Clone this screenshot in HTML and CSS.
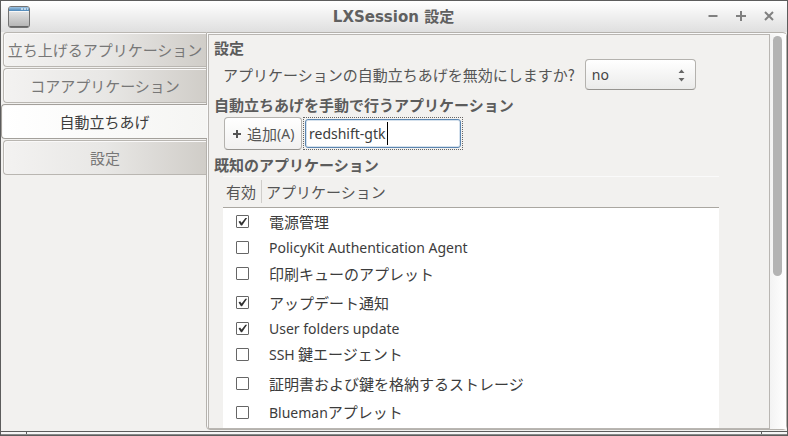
FILE: index.html
```html
<!DOCTYPE html>
<html lang="ja">
<head>
<meta charset="utf-8">
<title>LXSession 設定</title>
<link rel="stylesheet" href="styles.css">
</head>
<body>
<div class="window">
  <header class="titlebar">
    <svg class="app-icon" width="22" height="22" viewBox="0 0 22 22" aria-hidden="true">
      <defs>
        <linearGradient id="face" x1="0" y1="0" x2="0" y2="1"><stop offset="0" stop-color="#f2f2f2"/><stop offset="1" stop-color="#b2b2b2"/></linearGradient>
        <linearGradient id="bar" x1="0" y1="0" x2="0" y2="1"><stop offset="0" stop-color="#9dc3e2"/><stop offset="1" stop-color="#4d87b8"/></linearGradient>
      </defs>
      <rect x=".5" y=".5" width="21" height="21" rx="2.5" fill="url(#face)" stroke="#737373"/>
      <path d="M1 5V2.500Q1 1 2.500 1h17Q21 1 21 2.500V5z" fill="url(#bar)"/>
      <path d="M1.500 5.500h19" stroke="#f8f8f8"/>
      <path d="M13 3h2M16 3h2M19 3h1" stroke="#d9e8f4" stroke-width="1.500"/>
      <path d="M2 20.500h18" stroke="#666"/>
    </svg>
    <h1 class="title">LXSession <span class="cjk">設定</span></h1>
    <div class="controls">
      <button type="button" aria-label="最小化"><svg width="10" height="10" viewBox="0 0 10 10"><path d="M0.500 4h9" /></svg></button>
      <button type="button" aria-label="最大化"><svg width="10" height="10" viewBox="0 0 10 10"><path d="M0 4h10M5 -1v10" /></svg></button>
      <button type="button" aria-label="閉じる"><svg width="10" height="10" viewBox="0 0 10 10"><path d="M1 0l8 8M9 0l-8 8" /></svg></button>
    </div>
  </header>

  <div class="notebook">
    <nav class="tabs" role="tablist">
      <button type="button" class="tab" role="tab">立ち上げるアプリケーション</button>
      <button type="button" class="tab" role="tab">コアアプリケーション</button>
      <button type="button" class="tab active" role="tab" aria-selected="true">自動立ちあげ</button>
      <button type="button" class="tab" role="tab">設定</button>
    </nav>

    <main class="page">
      <div class="view">
        <h2>設定</h2>
        <div class="row">
          <label for="disable">アプリケーションの自動立ちあげを無効にしますか?</label>
          <span class="combo">
            <select id="disable"><option>no</option><option>yes</option></select>
            <svg class="arrows" width="7" height="13" viewBox="0 0 7 13" aria-hidden="true"><path d="M.5 4L3.500 0.500L6.500 4zM.5 9L3.500 12.500L6.500 9z"/></svg>
          </span>
        </div>
        <h2>自動立ちあげを手動で行うアプリケーション</h2>
        <div class="row add-row">
          <button type="button" class="add"><svg width="8" height="8" viewBox="0 0 8 8" aria-hidden="true"><path d="M0 4h8M4 0v8"/></svg>追加<span class="latin">(A)</span></button>
          <span class="entry"><input type="text" value="redshift-gtk" aria-label="アプリケーション名"><i class="caret"></i></span>
        </div>
        <h2>既知のアプリケーション</h2>
        <div class="tree">
          <table>
            <thead><tr><th class="enabled">有効</th><th>アプリケーション</th></tr></thead>
            <tbody>
              <tr><td><input type="checkbox" id="a1" checked></td><td><label for="a1">電源管理</label></td></tr>
              <tr class="short"><td><input type="checkbox" id="a2"></td><td><label for="a2" class="latin">PolicyKit Authentication Agent</label></td></tr>
              <tr><td><input type="checkbox" id="a3"></td><td><label for="a3">印刷キューのアプレット</label></td></tr>
              <tr><td><input type="checkbox" id="a4" checked></td><td><label for="a4">アップデート通知</label></td></tr>
              <tr class="short"><td><input type="checkbox" id="a5" checked></td><td><label for="a5" class="latin">User folders update</label></td></tr>
              <tr><td><input type="checkbox" id="a6"></td><td><label for="a6"><span class="latin">SSH</span> 鍵エージェント</label></td></tr>
              <tr><td><input type="checkbox" id="a7"></td><td><label for="a7">証明書および鍵を格納するストレージ</label></td></tr>
              <tr><td><input type="checkbox" id="a8"></td><td><label for="a8"><span class="latin">Blueman</span>アプレット</label></td></tr>
            </tbody>
          </table>
        </div>
      </div>
      <div class="scrollbar"><div class="thumb"></div></div>
    </main>
  </div>
  <footer class="grip"></footer>
</div>
</body>
</html>
```
FILE: styles.css
```css
* { box-sizing: border-box; }

body {
  margin: 0;
  background: #f2f1ef;
  color: #3c3c3c;
  font: 15px/20px "Noto Sans CJK JP", "Noto Sans", sans-serif;
}

button, input, select { font: inherit; color: inherit; margin: 0; }

.latin { font-family: "Noto Sans", sans-serif; font-size: 14px; }

.window {
  display: flex;
  flex-direction: column;
  height: 100vh;
  border: 1px solid #5c5c5c;
  overflow: hidden;
}

.titlebar {
  display: grid;
  grid-template-columns: 80px 1fr 80px;
  align-items: center;
  flex: none;
  height: 31px;
  padding: 0 8px 0 7px;
  background: linear-gradient(#ffffff, #dfdfdf);
}

.title { margin: 0; text-align: center; font-family: "DejaVu Sans", sans-serif; font-size: 15px; font-weight: bold; color: #606060; }
.cjk { font-family: "Noto Sans CJK JP", sans-serif; }

.controls { display: flex; justify-content: flex-end; gap: 8px; }
.controls button {
  display: grid;
  place-items: center;
  width: 20px;
  height: 20px;
  padding: 0;
  border: 0;
  background: none;
}
.controls svg { stroke: #808080; stroke-width: 2; overflow: visible; }

.notebook { display: flex; flex: 1; min-height: 0; }

.tabs {
  display: flex;
  flex-direction: column;
  gap: 1px;
  flex: none;
  width: 206px;
}

.tab {
  height: 35px;
  margin-left: 2px;
  margin-right: 1px;
  padding: 0;
  border: 1px solid #b9b6b1;
  border-right: 0;
  border-radius: 4px 0 0 4px;
  background: linear-gradient(90deg, #f3f2f1, #e8e7e5 50%, #d0cdc8);
  box-shadow: inset 1px 1px #faf9f9;
  color: #777;
  white-space: nowrap;
}
.tab.active {
  position: relative;
  margin-left: 0;
  margin-right: 0;
  border-color: #a3a09b;
  background: linear-gradient(90deg, #ffffff, #f5f5f3);
  color: #3c3c3c;
}

.page {
  display: flex;
  flex: 1;
  min-width: 0;
  margin-left: -1px;
  border: 1px solid #b5b2ad;
  border-radius: 0 4px 4px 4px;
  padding: 1px 0 0 1px;
  background: #fafafa;
}

.view {
  display: flex;
  flex-direction: column;
  flex: 1;
  min-width: 0;
  padding: 2px 50px 0 5px;
  border: 1px solid #b9b6b2;
  background: #f2f1ef;
  overflow: hidden;
}

h2 { flex: none; margin: 0; font-size: 15px; font-weight: bold; line-height: 22px; color: #5c5c5c; }

.row { display: flex; align-items: center; flex: none; gap: 10px; margin-left: 9px; margin-bottom: 4px; color: #555; }
.row label { white-space: nowrap; }

.combo { position: relative; display: flex; }
.combo select {
  appearance: none;
  width: 111px;
  height: 31px;
  padding: 0 6px;
  border: 1px solid #b4b2ae;
  border-bottom-color: #969490;
  border-radius: 4px;
  background: linear-gradient(#ffffff, #ebebea);
  font-family: "Noto Sans", sans-serif;
  font-size: 14px;
  color: #444;
}
.arrows { position: absolute; right: 11px; top: 10px; fill: #666; pointer-events: none; }

.add-row { gap: 1px; margin-top: 1px; margin-left: 10px; }
.add {
  display: flex;
  align-items: center;
  width: 78px;
  height: 33px;
  padding: 0 0 0 8px;
  border: 1px solid #b4b2ae;
  border-bottom-color: #969490;
  border-radius: 4px;
  background: linear-gradient(#ffffff, #f2f1f0);
  white-space: nowrap;
}
.add svg { margin-right: 6px; stroke: #555; stroke-width: 2; }

.entry { position: relative; display: flex; padding: 1px; border: 1px dotted #666; }
.entry input {
  width: 156px;
  height: 29px;
  padding: 0 3px;
  border: 1px solid #5c86b0;
  border-radius: 3px;
  box-shadow: inset 0 0 0 1px #d5e1ed;
  background: #fff;
  color: #3c3c3c;
  font-family: "Noto Sans", sans-serif;
  font-size: 14px;
  outline: none;
}
.caret { position: absolute; left: 83px; top: 4px; width: 1px; height: 23px; background: #000; }

.tree {
  flex: 1;
  min-height: 0;
  margin: 0 0 0 9px;
  border-top: 1px solid #fafafa;
  background: #fff;
  overflow: hidden;
}
table { width: 100%; border-collapse: collapse; }
th {
  height: 30px;
  padding: 0 4px;
  border-bottom: 1px solid #aaa7a1;
  background: #f2f1ef;
  color: #555;
  font-weight: normal;
  text-align: left;
}
.enabled {
  width: 39px;
  padding: 0 3px;
  background: linear-gradient(#cfcdca, #cfcdca) right 0 top 3px / 1px 23px no-repeat #f2f1ef;
  white-space: nowrap;
}
td { height: 29px; padding: 0; }
td:first-child { text-align: center; }
td:last-child { padding-left: 7px; }
.short td { height: 23px; line-height: 18px; }
td label { display: block; }

input[type="checkbox"] {
  appearance: none;
  display: block;
  width: 13px;
  height: 13px;
  margin: 0 auto;
  border: 1px solid #666;
  border-radius: 1px;
  background: #fff;
}
input[type="checkbox"]:checked::before {
  content: "";
  display: block;
  width: 11px;
  height: 11px;
  background: #333;
  clip-path: polygon(14% 50%, 28% 42%, 42% 58%, 76% 16%, 92% 16%, 46% 84%, 36% 84%);
}

.scrollbar { flex: none; width: 16px; padding: 2px 4px 0 3px; background: linear-gradient(90deg, #f3f3f3, #fff); }
.thumb { width: 9px; height: 61%; border-radius: 5px; background: #b3b3b3; }

.grip {
  flex: none;
  height: 4px;
  margin-top: 1px;
  border-top: 1px solid #5c5c5c;
  border-bottom: 1px solid #8a8a8a;
  background:
    linear-gradient(#5c5c5c, #5c5c5c) 25px 0 / 1px 3px no-repeat,
    linear-gradient(#5c5c5c, #5c5c5c) right 25px top 0 / 1px 3px no-repeat,
    #f5f5f5;
}
```
